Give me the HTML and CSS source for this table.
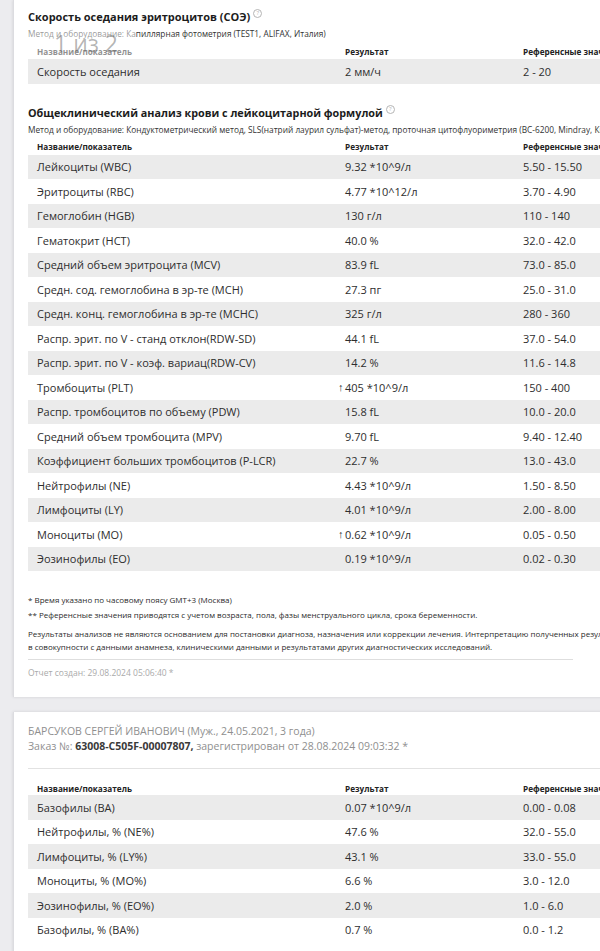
FILE: index.html
```html
<!DOCTYPE html>
<html lang="ru">
<head>
<meta charset="utf-8">
<link rel="stylesheet" href="styles.css">
</head>
<body>
<div class="page">
  <div class="pager">1 из 2</div>
  <section class="card card-first">
    <div class="block">
      <h2 class="title">Скорость оседания эритроцитов (СОЭ)<span class="help">?</span></h2>
      <div class="method"><span class="muted">Метод и оборудование:</span> Капиллярная фотометрия (TEST1, ALIFAX, Италия)</div>
      <div class="table">
        <div class="thead"><span class="c1">Название/показатель</span><span class="c2">Результат</span><span class="c3">Референсные значения**</span></div>
        <div class="row"><span class="c1">Скорость оседания</span><span class="c2">2 мм/ч</span><span class="c3">2 - 20</span></div>
      </div>
    </div>

    <div class="block block2">
      <h2 class="title title2">Общеклинический анализ крови с лейкоцитарной формулой<span class="help">?</span></h2>
      <div class="method">Метод и оборудование: Кондуктометрический метод, SLS(натрий лаурил сульфат)-метод, проточная цитофлуориметрия (BC-6200, Mindray, Китай)</div>
      <div class="table">
        <div class="thead"><span class="c1">Название/показатель</span><span class="c2">Результат</span><span class="c3">Референсные значения**</span></div>
        <div class="row"><span class="c1">Лейкоциты (WBC)</span><span class="c2">9.32 *10^9/л</span><span class="c3">5.50 - 15.50</span></div>
        <div class="row"><span class="c1">Эритроциты (RBC)</span><span class="c2">4.77 *10^12/л</span><span class="c3">3.70 - 4.90</span></div>
        <div class="row"><span class="c1">Гемоглобин (HGB)</span><span class="c2">130 г/л</span><span class="c3">110 - 140</span></div>
        <div class="row"><span class="c1">Гематокрит (HCT)</span><span class="c2">40.0 %</span><span class="c3">32.0 - 42.0</span></div>
        <div class="row"><span class="c1">Средний объем эритроцита (MCV)</span><span class="c2">83.9 fL</span><span class="c3">73.0 - 85.0</span></div>
        <div class="row"><span class="c1">Средн. сод. гемоглобина в эр-те (MCH)</span><span class="c2">27.3 пг</span><span class="c3">25.0 - 31.0</span></div>
        <div class="row"><span class="c1">Средн. конц. гемоглобина в эр-те (MCHC)</span><span class="c2">325 г/л</span><span class="c3">280 - 360</span></div>
        <div class="row"><span class="c1">Распр. эрит. по V - станд отклон(RDW-SD)</span><span class="c2">44.1 fL</span><span class="c3">37.0 - 54.0</span></div>
        <div class="row"><span class="c1">Распр. эрит. по V - коэф. вариац(RDW-CV)</span><span class="c2">14.2 %</span><span class="c3">11.6 - 14.8</span></div>
        <div class="row"><span class="c1">Тромбоциты (PLT)</span><span class="c2"><span class="up">↑</span>405 *10^9/л</span><span class="c3">150 - 400</span></div>
        <div class="row"><span class="c1">Распр. тромбоцитов по объему (PDW)</span><span class="c2">15.8 fL</span><span class="c3">10.0 - 20.0</span></div>
        <div class="row"><span class="c1">Средний объем тромбоцита (MPV)</span><span class="c2">9.70 fL</span><span class="c3">9.40 - 12.40</span></div>
        <div class="row"><span class="c1">Коэффициент больших тромбоцитов (P-LCR)</span><span class="c2">22.7 %</span><span class="c3">13.0 - 43.0</span></div>
        <div class="row"><span class="c1">Нейтрофилы (NE)</span><span class="c2">4.43 *10^9/л</span><span class="c3">1.50 - 8.50</span></div>
        <div class="row"><span class="c1">Лимфоциты (LY)</span><span class="c2">4.01 *10^9/л</span><span class="c3">2.00 - 8.00</span></div>
        <div class="row"><span class="c1">Моноциты (MO)</span><span class="c2"><span class="up">↑</span>0.62 *10^9/л</span><span class="c3">0.05 - 0.50</span></div>
        <div class="row"><span class="c1">Эозинофилы (EO)</span><span class="c2">0.19 *10^9/л</span><span class="c3">0.02 - 0.30</span></div>
      </div>
    </div>

    <div class="notes">
      <p class="note">* Время указано по часовому поясу GMT+3 (Москва)</p>
      <p class="note">** Референсные значения приводятся с учетом возраста, пола, фазы менструального цикла, срока беременности.</p>
      <p class="disclaimer">Результаты анализов не являются основанием для постановки диагноза, назначения или коррекции лечения. Интерпретацию полученных результатов проводит лечащий врач<br>в совокупности с данными анамнеза, клиническими данными и результатами других диагностических исследований.</p>
    </div>
    <div class="created">Отчет создан: 29.08.2024 05:06:40 *</div>
  </section>

  <section class="card card-second">
    <div class="patient">БАРСУКОВ СЕРГЕЙ ИВАНОВИЧ (Муж., 24.05.2021, 3 года)</div>
    <div class="order">Заказ №: <b>63008-C505F-00007807,</b> зарегистрирован от 28.08.2024 09:03:32 *</div>
    <div class="table table-second">
      <div class="thead"><span class="c1">Название/показатель</span><span class="c2">Результат</span><span class="c3">Референсные значения**</span></div>
      <div class="row"><span class="c1">Базофилы (BA)</span><span class="c2">0.07 *10^9/л</span><span class="c3">0.00 - 0.08</span></div>
      <div class="row"><span class="c1">Нейтрофилы, % (NE%)</span><span class="c2">47.6 %</span><span class="c3">32.0 - 55.0</span></div>
      <div class="row"><span class="c1">Лимфоциты, % (LY%)</span><span class="c2">43.1 %</span><span class="c3">33.0 - 55.0</span></div>
      <div class="row"><span class="c1">Моноциты, % (MO%)</span><span class="c2">6.6 %</span><span class="c3">3.0 - 12.0</span></div>
      <div class="row"><span class="c1">Эозинофилы, % (EO%)</span><span class="c2">2.0 %</span><span class="c3">1.0 - 6.0</span></div>
      <div class="row"><span class="c1">Базофилы, % (BA%)</span><span class="c2">0.7 %</span><span class="c3">0.0 - 1.2</span></div>
    </div>
  </section>
</div>
</body>
</html>
```

FILE: styles.css
```css
html, body {
  margin: 0;
  padding: 0;
  background: #ececef;
  overflow: hidden;
}
body {
  font-family: "Open Sans", "Noto Sans", sans-serif;
  color: #2b2b2b;
  width: 600px;
  height: 951px;
}
.page {
  position: relative;
  width: 760px;
  padding-left: 13px;
}
.card {
  background: #fff;
  border-left: 1px solid #dcdce0;
  box-shadow: 0 0 3px rgba(0,0,0,0.12);
  padding: 0 0 0 14px;
}
.card-first {
  padding-top: 8px;
  height: 697px;
  box-sizing: border-box;
}
.card-second {
  margin-top: 15px;
  padding-top: 12px;
  height: 260px;
  box-sizing: border-box;
}
.title {
  margin: 0;
  font-size: 11px;
  font-weight: 700;
  color: #1c1c1c;
  line-height: 18px;
  display: flex;
  align-items: center;
}
.title2 {
  font-size: 10.8px;
}
.help {
  display: inline-block;
  width: 7px;
  height: 7px;
  border: 1px solid #b5b5b5;
  border-radius: 50%;
  font-size: 6px;
  line-height: 7px;
  text-align: center;
  color: #b5b5b5;
  font-weight: 400;
  margin-left: 3px;
  margin-top: -7px;
}
.method {
  font-size: 8.3px;
  line-height: 12px;
  margin-top: 2px;
  color: #333;
  white-space: nowrap;
}
.muted {
  color: #333;
}
.block2 {
  margin-top: 20px;
}
.table {
  margin-top: 3px;
}
.thead, .row {
  display: grid;
  grid-template-columns: 308px 178px 1fr;
  align-items: center;
}
.thead {
  height: 16px;
  font-size: 8.2px;
  font-weight: 700;
  color: #222;
}
.row {
  height: 24.5px;
  font-size: 11px;
  color: #2e2e2e;
}
.row:nth-child(even) {
  background: #ebebeb;
}
.c1, .c2, .c3 {
  padding-left: 9px;
  white-space: nowrap;
}
.up {
  display: inline-block;
  width: 0;
  margin-left: -7px;
  margin-right: 7px;
  font-size: 11px;
  position: relative;
  top: -1px;
}
.notes {
  margin-top: 21px;
  font-size: 8px;
  color: #2b2b2b;
  padding-right: 200px;
}
.note {
  margin: 0;
  line-height: 15px;
}
.disclaimer {
  margin: 5px 0 0;
  line-height: 13px;
  white-space: nowrap;
  padding-bottom: 6px;
  border-bottom: 1px solid #dedede;
}
.created {
  font-size: 8.5px;
  color: #aaa;
  margin-top: 7px;
}
.patient {
  font-size: 10.5px;
  color: #8f8f8f;
  line-height: 15px;
}
.order {
  font-size: 10.5px;
  color: #8f8f8f;
  line-height: 15px;
  padding-bottom: 14px;
  border-bottom: 1px solid #e2e2e2;
}
.order b {
  color: #3a3a3a;
  font-weight: 700;
}
.table-second {
  margin-top: 12px;
}
.table-second .thead {
  height: 14px;
}
.pager {
  position: absolute;
  left: 28px;
  top: 28px;
  width: 108px;
  height: 28px;
  border-radius: 5px;
  background: rgba(255,255,255,0.5);
  color: rgba(90,90,90,0.45);
  font-family: "Open Sans", sans-serif;
  font-size: 23px;
  line-height: 30px;
  padding-left: 26px;
  box-sizing: border-box;
  white-space: nowrap;
  z-index: 2;
}
```
